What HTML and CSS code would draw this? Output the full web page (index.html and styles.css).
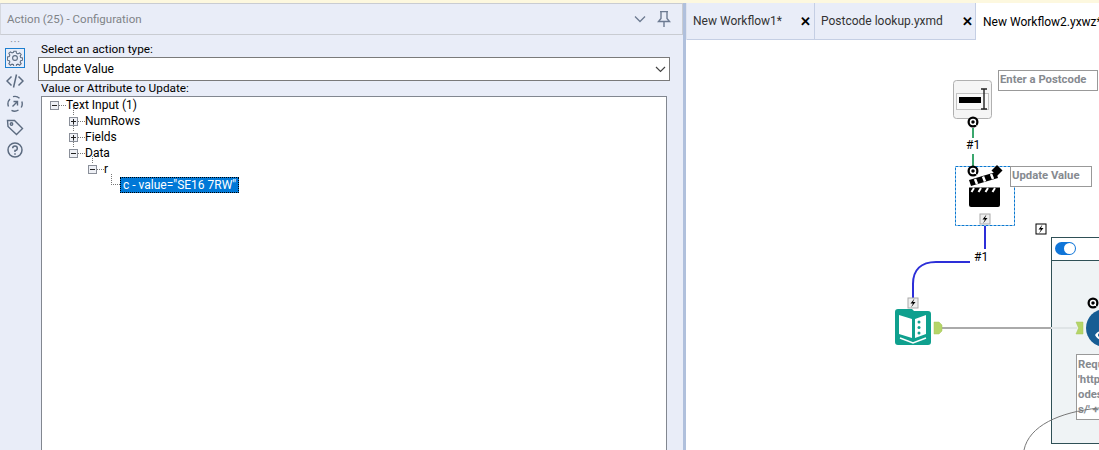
FILE: index.html
```html
<!DOCTYPE html>
<html lang="en">
<head>
    <meta charset="UTF-8">
    <title>Action (25) - Configuration</title>
    <link rel="stylesheet" href="styles.css">
</head>
<body>
    <div class="app">
        <!-- configuration panel -->
        <section class="config-panel">
            <header class="panel-header">
                <span class="panel-title">Action (25) - Configuration</span>
                <svg class="header-chevron" width="12" height="8" viewBox="0 0 12 8"><path d="M1 1.5l5 5 5-5" fill="none" stroke="#6d7b92" stroke-width="1.3"/></svg>
                <svg class="header-pin" width="14" height="16" viewBox="0 0 14 16"><path d="M3 .5h8M4 .5v7L1.500 10.500h11L10 7.500v-7M7 10.500V16" fill="none" stroke="#6d7b92" stroke-width="1.400"/></svg>
            </header>
            <div class="panel-body">
                <nav class="side-icons">
                    <div class="side-dots">• • •</div>
                    <div class="side-icon active">
                        <svg width="16" height="16" viewBox="0 0 16 16" fill="none" stroke="#5c6b80" stroke-width="1.100"><circle cx="8" cy="8" r="2.400"/><path d="M6.800 1h2.400l.4 2 1.500.7 1.800-1.100 1.600 1.700-1.100 1.700.6 1.500 2 .5v2.300l-2 .5-.6 1.500 1.100 1.700-1.700 1.600-1.700-1.100-1.500.6-.4 2H6.800l-.4-2-1.500-.6-1.700 1.100-1.700-1.700 1.100-1.700-.6-1.400-2-.5V6.900l2-.5.6-1.500-1.100-1.700 1.700-1.700 1.700 1.100 1.500-.6z" transform="translate(.4 .4) scale(.95)"/></svg>
                    </div>
                    <div class="side-icon">
                        <svg width="18" height="16" viewBox="0 0 18 16" fill="none" stroke="#5c6b80" stroke-width="1.500"><path d="M5.500 3.500L1 8l4.500 4.500M12.500 3.500L17 8l-4.500 4.500M10.500 1.500l-3 13"/></svg>
                    </div>
                    <div class="side-icon">
                        <svg width="18" height="18" viewBox="0 0 18 18" fill="none" stroke="#5c6b80" stroke-width="1.400"><path d="M2.500 11.500A7 7 0 0 1 4 4M7 1.700a7 7 0 0 1 6.500 1.500M15.800 6.500a7 7 0 0 1-.6 6M12.500 15a7 7 0 0 1-7 .4"/><path d="M6.500 11.500l5-5M7.500 6.500h4v4"/></svg>
                    </div>
                    <div class="side-icon">
                        <svg width="18" height="18" viewBox="0 0 18 18" fill="none" stroke="#5c6b80" stroke-width="1.400"><path d="M1.500 2.500h7l8 8-6 6-8.500-8z"/><circle cx="5.500" cy="6" r="1.200"/></svg>
                    </div>
                    <div class="side-icon">
                        <svg width="16" height="16" viewBox="0 0 16 16" fill="none" stroke="#5c6b80" stroke-width="1.500"><circle cx="8" cy="8" r="7"/><path d="M5.700 6.200A2.300 2.300 0 1 1 8 8.500v1.500M8 11.300v1.500"/></svg>
                    </div>
                </nav>
                <div class="form-area">
                    <label class="field-label">Select an action type:</label>
                    <div class="select-box">
                        <span>Update Value</span>
                        <svg width="11" height="7" viewBox="0 0 11 7"><path d="M1 1l4.500 4.500L10 1" fill="none" stroke="#444" stroke-width="1.200"/></svg>
                    </div>
                    <label class="field-label">Value or Attribute to Update:</label>
                    <div class="tree-box">
                        <div class="tree-row level-0"><i class="expander minus"></i><span class="dash"></span>Text Input (1)</div>
                        <div class="tree-row level-1 stem"><i class="expander plus"></i><span class="dash"></span>NumRows</div>
                        <div class="tree-row level-1 stem"><i class="expander plus"></i><span class="dash"></span>Fields</div>
                        <div class="tree-row level-1 stem"><i class="expander minus"></i><span class="dash"></span>Data</div>
                        <div class="tree-row level-2 stem"><i class="expander minus"></i><span class="dash"></span>r</div>
                        <div class="tree-row level-3"><span class="leaf-line"></span><span class="tree-selected">c - value="SE16 7RW"</span></div>
                    </div>
                </div>
            </div>
        </section>

        <div class="splitter"></div>

        <!-- workflow side -->
        <section class="workflow-side">
            <div class="tab-bar">
                <div class="tab"><span class="tab-name">New Workflow1*</span><span class="tab-close">✕</span></div>
                <div class="tab second-tab"><span class="tab-name">Postcode lookup.yxmd</span><span class="tab-close">✕</span></div>
                <div class="tab current"><span class="tab-name">New Workflow2.yxwz*</span></div>
            </div>
            <div class="canvas">
                <div class="container-box">
                    <div class="container-head"><span class="toggle"></span></div>
                </div>

                <!-- viewBox keeps page coordinates for the nodes -->
                <svg class="canvas-drawing" width="413" height="410" viewBox="686 40 413 410">
                    <path d="M973 128v10M973 154v12" stroke="#3aa76d" stroke-width="2" fill="none"/>
                    <path d="M985 226v23M970 262h-34c-15 0-23 8-23 22v14" stroke="#2d2fd8" stroke-width="2" fill="none"/>
                    <path d="M942 328h109" stroke="#aaaaaa" stroke-width="2"/>
                    <path d="M1051 328h26" stroke="#dfe4e6" stroke-width="2"/>

                    <!-- text box tool -->
                    <rect x="953.500" y="80.500" width="38" height="38" rx="3" fill="#f5f5f5" stroke="#b0b0b0"/>
                    <rect x="956.500" y="93.500" width="32" height="16" fill="#fafafa" stroke="#c4c4c4"/>
                    <rect x="959" y="97" width="22" height="6" fill="#000"/>
                    <path d="M981 89h6M984 89v20M981 109h6" stroke="#222" stroke-width="1.400" fill="none"/>

                    <!-- action tool, selected -->
                    <rect x="955.500" y="166.500" width="59" height="59" fill="none" stroke="#0a78d0" stroke-dasharray="3 1"/>
                    <rect x="969" y="190" width="31" height="17" rx="2" fill="#000"/>
                    <path d="M969 187.500h31v5h-31z" fill="#000"/>
                    <path d="M974 188l-2.500 4M981 188l-2.500 4M988 188l-2.500 4M995 188l-2.500 4" stroke="#fff" stroke-width="2"/>
                    <path d="M969 180l27-8 2 6-27 8z" fill="#000"/>
                    <path d="M975 179l2 5M983 176.500l2 5M991 174l2 5" stroke="#fff" stroke-width="2.500"/>
                    <path d="M997 165l5.500 5.500-5.500 5.500-5.500-5.500z" fill="#000"/>

                    <!-- input data style tool -->
                    <path d="M898 309h14l2 2h14a3 3 0 0 1 3 3v28a3 3 0 0 1-3 3h-30a3 3 0 0 1-3-3v-30a3 3 0 0 1 3-3z" fill="#0fa08e"/>
                    <path d="M899 315l13 4v19l-13-4zM915 319l11-4v19l-11 4z" fill="#fff"/>
                    <path d="M900 338l13 5 13-5" fill="none" stroke="#fff" stroke-width="1.400"/>
                    <circle cx="919" cy="322" r="1.500" fill="#0fa08e"/>
                    <circle cx="919" cy="327.500" r="1.500" fill="#0fa08e"/>
                    <circle cx="919" cy="333" r="1.500" fill="#0fa08e"/>

                    <!-- connectors -->
                    <path d="M934 322h5l3 3v6l-3 3h-5z" fill="#b5d568" stroke="#a4c65a" stroke-width=".5"/>
                    <path d="M1076 322h7v12h-7l2.500-6z" fill="#b5d568" stroke="#a4c65a" stroke-width=".5"/>

                    <!-- blue tool inside the container -->
                    <circle cx="1105" cy="328" r="19" fill="#175d94"/>
                    <path d="M1095 335c3-4 7-5 10-3v7c-4 2-8 0-10-4z" fill="#fff"/>
                    <circle cx="1100" cy="335" r="2" fill="#175d94"/>

                    <!-- Q badges -->
                    <g class="badge-q" transform="translate(973 122)"><circle r="5.500" fill="#000"/><circle r="2.500" fill="none" stroke="#fff" stroke-width="1.500"/><path d="M1 1l2.500 2.500" stroke="#fff"/></g>
                    <g class="badge-q" transform="translate(973 171)"><circle r="5.500" fill="#000"/><circle r="2.500" fill="none" stroke="#fff" stroke-width="1.500"/><path d="M1 1l2.500 2.500" stroke="#fff"/></g>
                    <g class="badge-q" transform="translate(1093 303)"><circle r="5.500" fill="#000"/><circle r="2.500" fill="none" stroke="#fff" stroke-width="1.500"/><path d="M1 1l2.500 2.500" stroke="#fff"/></g>

                    <!-- lightning badges -->
                    <g transform="translate(979.500 213.500)"><rect x=".5" y=".5" width="10" height="10" fill="#eeeeee" stroke="#aaaaaa"/><path d="M7 1L3 6h2.500L3.500 10 8 4.500H5.500z" fill="#000"/></g>
                    <g transform="translate(907.500 297.500)"><rect x=".5" y=".5" width="10" height="10" fill="#eeeeee" stroke="#aaaaaa"/><path d="M7 1L3 6h2.500L3.500 10 8 4.500H5.500z" fill="#000"/></g>
                    <g transform="translate(1035.500 223.500)"><rect x=".5" y=".5" width="10" height="10" fill="#fff" stroke="#000"/><path d="M7 1L3 6h2.500L3.500 10 8 4.500H5.500z" fill="#000"/></g>
                </svg>

                <span class="wire-label label-a">#1</span>
                <span class="wire-label label-b">#1</span>
                <div class="annotation note-postcode">Enter a Postcode</div>
                <div class="annotation note-update">Update Value</div>
                <div class="annotation note-request">Requ<br>'http<br>odes<br>s/' +</div>

                <svg class="canvas-drawing" width="413" height="410" viewBox="686 40 413 410">
                    <path d="M1099 408c-40 4-70 18-75 42" fill="none" stroke="#777" stroke-width="1"/>
                </svg>
            </div>
        </section>
    </div>
</body>
</html>
```

FILE: styles.css
```css
* {
    box-sizing: border-box;
}

html, body {
    margin: 0;
    height: 100%;
    overflow: hidden;
}

body {
    background: #fff;
    color: #000;
    font-family: Roboto, "Noto Sans", sans-serif;
    font-size: 12px;
}

.app {
    display: flex;
    height: 450px;
    border-top: 3px solid #fdf8df;
}

/* left panel */
.config-panel {
    width: 683px;
    background: #e9edf8;
    display: flex;
    flex-direction: column;
    overflow: hidden;
}

.panel-header {
    flex: none;
    height: 32px;
    border: 1px solid #c9ccd2;
    border-left-color: #d5d8df;
    display: flex;
    align-items: center;
    padding: 0 11px 0 6px;
}

.panel-title {
    color: #7f8387;
    flex: 1;
    font-size: 11.5px;
}

.header-chevron {
    margin-right: 11px;
}

.panel-body {
    flex: 1;
    min-height: 0;
    display: flex;
}

.side-icons {
    flex: none;
    width: 28px;
    padding: 4px 0 0 5px;
}

.side-dots {
    color: #7f8794;
    font-size: 6px;
    line-height: 6px;
    width: 20px;
    text-align: center;
    margin-bottom: 3px;
}

.side-icon {
    width: 20px;
    height: 20px;
    margin-bottom: 3px;
    display: flex;
    align-items: center;
    justify-content: center;
    border: 1px solid transparent;
}

.side-icon.active {
    border-color: #1d7fd0;
}

.form-area {
    flex: 1;
    padding: 7px 13px 0 10px;
}

.field-label {
    display: block;
    height: 15px;
    line-height: 15px;
    padding-left: 3px;
    font-size: 11.8px;
}

.select-box {
    height: 24px;
    background: #fff;
    border: 1px solid #7a7a7a;
    display: flex;
    align-items: center;
    justify-content: space-between;
    padding: 0 3px 0 4px;
}

.tree-box {
    margin: 0 3px;
    height: 380px;
    background: #fff;
    border: 1px solid #828790;
}

/* tree */
.tree-row {
    height: 16px;
    line-height: 16px;
    display: flex;
    align-items: center;
    position: relative;
    white-space: nowrap;
}

.level-0 { padding-left: 8px; }
.level-1 { padding-left: 27px; }
.level-2 { padding-left: 46px; }
.level-3 { padding-left: 71px; }

.expander {
    width: 9px;
    height: 9px;
    border: 1px solid #8a8f99;
    background: #eef0f5;
    position: relative;
    flex: none;
}

.expander::before {
    content: "";
    position: absolute;
    left: 1px;
    top: 3px;
    width: 5px;
    height: 1px;
    background: #222;
}

.expander.plus::after {
    content: "";
    position: absolute;
    left: 3px;
    top: 1px;
    width: 1px;
    height: 5px;
    background: #222;
}

.dash {
    width: 7px;
    flex: none;
    height: 1px;
    background-image: linear-gradient(90deg, #777 1px, transparent 1px);
    background-size: 2px 1px;
}

.stem::before {
    content: "";
    position: absolute;
    top: -5px;
    height: 8px;
    width: 1px;
    background-image: linear-gradient(#777 1px, transparent 1px);
    background-size: 1px 2px;
}

.level-1::before { left: 31px; }
.level-2::before { left: 50px; }

.leaf-line {
    position: absolute;
    left: 69px;
    top: -3px;
    width: 9px;
    height: 11px;
    border-left: 1px dotted #777;
    border-bottom: 1px dotted #777;
}

.tree-selected {
    margin-left: 7px;
    background: #0078d7;
    color: #fff;
    outline: 1px dotted #000;
    outline-offset: -1px;
    padding: 0 3px 0 3px;
    height: 16px;
    line-height: 16px;
}

.splitter {
    flex: none;
    width: 3px;
    background: #b0c0dc;
}

/* workflow */
.workflow-side {
    flex: 1;
    min-width: 0;
    overflow: hidden;
}

.tab-bar {
    height: 37px;
    display: flex;
    border-left: 1px solid #dfe3ee;
}

.tab {
    width: 128px;
    flex: none;
    background: #e9edf8;
    border-right: 1px solid #c5cfe4;
    border-bottom: 1px solid #c5cfe4;
    display: flex;
    align-items: center;
    justify-content: space-between;
    padding: 0 3px 0 6px;
    color: #333;
}

.second-tab {
    width: 161px;
    padding-right: 2px;
}

.tab-close {
    font-size: 13px;
    font-weight: 700;
    color: #000;
}

.tab.current {
    flex: 1;
    background: #fff;
    border: none;
    color: #000;
    white-space: nowrap;
    padding-left: 7px;
}

.canvas {
    position: relative;
    height: 410px;
    overflow: hidden;
}

.canvas-drawing {
    position: absolute;
    left: 0;
    top: 0;
}

.container-box {
    position: absolute;
    left: 365px;
    top: 197px;
    width: 80px;
    height: 207px;
    background: #eff3f5;
    border: 1.5px solid #2f5056;
}

.container-head {
    height: 23px;
    background: #fff;
    border-bottom: 1px solid #2f5056;
    padding: 4px 0 0 3px;
}

.toggle {
    display: block;
    width: 21px;
    height: 13px;
    border-radius: 7px;
    background: #0f75d8;
    position: relative;
}

.toggle::after {
    content: "";
    position: absolute;
    right: 1px;
    top: 1px;
    width: 11px;
    height: 11px;
    border-radius: 50%;
    background: #fff;
}

.wire-label {
    position: absolute;
    background: #fff;
    line-height: 14px;
    padding: 0 1px;
}

.label-a { left: 279px; top: 98px; }
.label-b { left: 287px; top: 210px; }

.annotation {
    position: absolute;
    background: #fff;
    border: 1px solid #999;
    color: #868a90;
    font-weight: 700;
    font-size: 11.3px;
    padding: 2px 1px;
    white-space: nowrap;
    overflow: hidden;
}

.note-postcode {
    left: 312px;
    top: 30px;
    width: 100px;
    height: 21px;
}

.note-update {
    left: 324px;
    top: 126px;
    width: 82px;
    height: 21px;
}

.note-request {
    left: 390px;
    top: 314px;
    width: 40px;
    height: 66px;
    line-height: 15px;
}
```
